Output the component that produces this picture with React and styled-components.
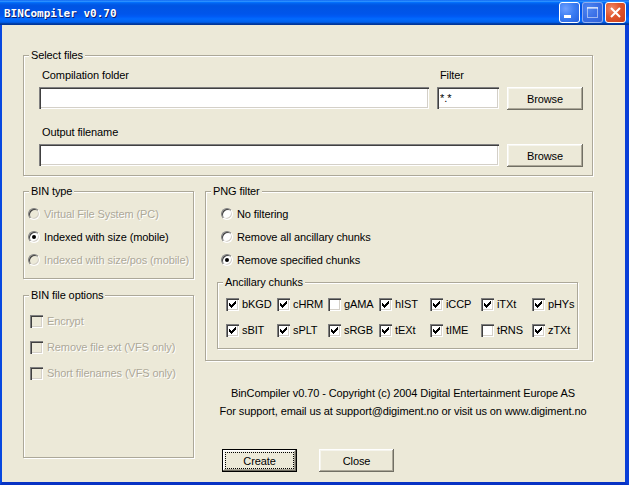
import React from 'react';
import styled, { createGlobalStyle } from 'styled-components';

const Global = createGlobalStyle`
  html, body {
    margin: 0;
    padding: 0;
    background: #ECE9D8;
  }
  body {
    font-family: "Liberation Sans", Arial, sans-serif;
    font-size: 11px;
    letter-spacing: -0.1px;
    color: #000;
  }
`;

const FACE = '#ECE9D8';

const Window = styled.div`
  width: 629px;
  height: 485px;
  display: flex;
  flex-direction: column;
  background: #0a3fd8;
  overflow: hidden;
`;

const TitleBar = styled.div`
  height: 25px;
  flex: none;
  display: flex;
  align-items: center;
  padding: 0 3px 0 4px;
  background: linear-gradient(to bottom, #0058ee 0%, #3593ff 4%, #288eff 6%, #127dff 8%, #036ffc 10%,
    #0262ee 14%, #0057e5 20%, #0054e3 24%, #0055eb 56%, #005bf5 66%, #026afe 76%, #0062ef 86%,
    #0052d6 92%, #0040ab 94%, #003092 100%);
`;

const TitleText = styled.div`
  flex: 1;
  color: #fff;
  font-family: "DejaVu Sans Mono", "Liberation Mono", monospace;
  font-weight: bold;
  font-size: 11px;
  letter-spacing: 0;
  text-shadow: 1px 1px 0 #0a1e6e;
  margin-top: 1px;
`;

const TitleButtons = styled.div`
  display: flex;
  gap: 2px;
  margin-top: -1px;
`;

const CapButton = styled.div`
  width: 21px;
  height: 21px;
  box-sizing: border-box;
  border-radius: 3px;
  border: 1px solid ${p => (p.$dim ? 'rgba(255,255,255,0.45)' : '#fff')};
  display: flex;
  align-items: center;
  justify-content: center;
  background: ${p =>
    p.$kind === 'close'
      ? 'radial-gradient(circle at 30% 30%, #f08a6a 0%, #e0542c 45%, #c9401c 100%)'
      : p.$dim
      ? 'radial-gradient(circle at 30% 30%, #4f86f0 0%, #3a6fe6 50%, #2e60d8 100%)'
      : 'radial-gradient(circle at 30% 30%, #6fa0ff 0%, #3c7ef3 45%, #2360df 100%)'};
`;

const Body = styled.div`
  flex: 1;
  background: ${FACE};
  border-left: 2px solid #0848e0;
  border-right: 4px solid #0a3fd8;
  border-bottom: 3px solid #0833c4;
  padding: 30px 0 0 21px;
  display: flex;
  flex-direction: column;
`;

const Group = styled.div`
  box-sizing: border-box;
  width: ${p => p.$w}px;
  height: ${p => p.$h}px;
  flex: none;
  border: 1px solid #aca899;
  box-shadow: inset 1px 1px 0 #fff, 1px 1px 0 #fff;
  display: flex;
  flex-direction: column;
  align-items: flex-start;
`;

const Caption = styled.div`
  margin: -7px 0 0 5px;
  padding: 0 2px;
  line-height: 13px;
  height: 13px;
  background: ${FACE};
  white-space: nowrap;
`;

const FilesGrid = styled.div`
  display: grid;
  grid-template-columns: 390px 62px 76px;
  column-gap: 8px;
  row-gap: 5px;
  align-items: start;
  padding: 7px 0 0 15px;
`;

const FieldLabel = styled.div`
  line-height: 13px;
  padding-left: 3px;
  grid-column: ${p => p.$span || 'auto'};
  margin-top: ${p => p.$gap || 0}px;
  white-space: nowrap;
`;

const TextBox = styled.input`
  box-sizing: border-box;
  width: 100%;
  height: 22px;
  margin: 0;
  padding: 0 3px;
  border: none;
  outline: none;
  background: #fff;
  font: 11px "Liberation Sans", Arial, sans-serif;
  color: #000;
  grid-column: ${p => p.$span || 'auto'};
  box-shadow: inset 1px 1px #808080, inset 2px 2px #404040, inset -1px -1px #fff, inset -2px -2px #d4d0c8;
`;

const Button = styled.button`
  box-sizing: border-box;
  width: ${p => p.$w || 75}px;
  height: 23px;
  margin: 0;
  padding: 0;
  font: 11px "Liberation Sans", Arial, sans-serif;
  letter-spacing: -0.1px;
  color: #000;
  background: ${FACE};
  border: ${p => (p.$default ? '1px solid #000' : 'none')};
  box-shadow: inset -1px -1px #716f64, inset 1px 1px #fff, inset -2px -2px #aca899, inset 2px 2px #f6f5ee;
  display: flex;
  align-items: center;
  justify-content: center;
`;

const FocusRing = styled.span`
  box-sizing: border-box;
  width: 69px;
  height: 17px;
  border: 1px dotted #000;
  display: flex;
  align-items: center;
  justify-content: center;
`;

const Columns = styled.div`
  display: flex;
  gap: 11px;
  margin-top: 15px;
`;

const LeftCol = styled.div`
  display: flex;
  flex-direction: column;
  gap: 16px;
`;

const RightCol = styled.div`
  display: flex;
  flex-direction: column;
`;

const OptionList = styled.div`
  display: flex;
  flex-direction: column;
  padding: ${p => p.$pad};
`;

const Option = styled.label`
  display: flex;
  align-items: center;
  height: ${p => p.$h || 23}px;
  white-space: nowrap;
  color: ${p => (p.$off ? '#aca899' : '#000')};
  text-shadow: ${p => (p.$off ? '1px 1px 0 #fff' : 'none')};
`;

const RadioDot = styled.span`
  box-sizing: border-box;
  width: 12px;
  height: 12px;
  flex: none;
  margin-right: 4px;
  border-radius: 50%;
  border: 1px solid;
  border-color: #808080 #fff #fff #808080;
  background: ${p => (p.$off ? FACE : '#fff')};
  box-shadow: inset 1px 1px 0 #404040, inset -1px -1px 0 #d4d0c8;
  display: flex;
  align-items: center;
  justify-content: center;
  text-shadow: none;
  &::after {
    content: '';
    width: 4px;
    height: 4px;
    border-radius: 50%;
    background: #000;
    display: ${p => (p.$on ? 'block' : 'none')};
  }
`;

const Box = styled.span`
  box-sizing: border-box;
  width: 13px;
  height: 13px;
  flex: none;
  margin-right: ${p => p.$gap || 4}px;
  background: ${p => (p.$off ? FACE : '#fff')};
  box-shadow: inset 1px 1px #808080, inset 2px 2px #404040, inset -1px -1px #fff, inset -2px -2px #d4d0c8;
  display: flex;
`;

const ChunkGrid = styled.div`
  display: grid;
  grid-template-columns: repeat(7, 51px);
  grid-auto-rows: 26px;
  padding: 2px 0 0 8px;
`;

const Footer = styled.div`
  margin-top: 23px;
  padding-left: 8px;
  text-align: center;
  line-height: 18px;
`;

const ButtonRow = styled.div`
  display: flex;
  gap: 22px;
  margin-top: 29px;
  padding-left: 17px;
`;

const CheckMark = () => (
  <svg width="13" height="13" viewBox="0 0 13 13" shapeRendering="crispEdges">
    {[2, 3, 4, 3, 2, 1, 0].map((o, i) => (
      <rect key={i} x={3 + i} y={3 + o} width="1" height="3" fill="#000" />
    ))}
  </svg>
);

const Radio = ({ on, off, children }) => (
  <Option $off={off}>
    <RadioDot $on={on} $off={off} />
    {children}
  </Option>
);

const Check = ({ on, off, gap, h, children }) => (
  <Option $off={off} $h={h}>
    <Box $off={off} $gap={gap}>{on && <CheckMark />}</Box>
    {children}
  </Option>
);

const chunks = [
  ['bKGD', true], ['cHRM', true], ['gAMA', false], ['hIST', true], ['iCCP', true], ['iTXt', true], ['pHYs', true],
  ['sBIT', true], ['sPLT', true], ['sRGB', true], ['tEXt', true], ['tIME', true], ['tRNS', false], ['zTXt', true],
];

export default function App() {
  return (
    <>
      <Global />
      <Window>
        <TitleBar>
          <TitleText>BINCompiler v0.70</TitleText>
          <TitleButtons>
            <CapButton>
              <svg width="19" height="19" viewBox="0 0 19 19">
                <rect x="4" y="12" width="7" height="3" fill="#fff" />
              </svg>
            </CapButton>
            <CapButton $dim>
              <svg width="19" height="19" viewBox="0 0 19 19" shapeRendering="crispEdges">
                <rect x="4.5" y="4.5" width="10" height="10" fill="none" stroke="rgba(255,255,255,0.5)" />
                <rect x="4" y="4" width="11" height="2" fill="rgba(255,255,255,0.5)" />
              </svg>
            </CapButton>
            <CapButton $kind="close">
              <svg width="19" height="19" viewBox="0 0 19 19">
                <path d="M5 5 L14 14 M14 5 L5 14" stroke="#fff" strokeWidth="2" />
              </svg>
            </CapButton>
          </TitleButtons>
        </TitleBar>
        <Body>
          <Group $w={570} $h={121}>
            <Caption>Select files</Caption>
            <FilesGrid>
              <FieldLabel>Compilation folder</FieldLabel>
              <FieldLabel>Filter</FieldLabel>
              <span />
              <TextBox readOnly value="" />
              <TextBox readOnly value="*.*" />
              <Button $w={76}>Browse</Button>
              <FieldLabel $span="1 / 3" $gap={11}>Output filename</FieldLabel>
              <span />
              <TextBox $span="1 / 3" readOnly value="" />
              <Button $w={76}>Browse</Button>
            </FilesGrid>
          </Group>
          <Columns>
            <LeftCol>
              <Group $w={171} $h={88}>
                <Caption>BIN type</Caption>
                <OptionList $pad="4px 0 0 4px">
                  <Radio off>Virtual File System (PC)</Radio>
                  <Radio on>Indexed with size (mobile)</Radio>
                  <Radio off>Indexed with size/pos (mobile)</Radio>
                </OptionList>
              </Group>
              <Group $w={171} $h={163}>
                <Caption>BIN file options</Caption>
                <OptionList $pad="6px 0 0 6px">
                  <Check off h={26}>Encrypt</Check>
                  <Check off h={26}>Remove file ext (VFS only)</Check>
                  <Check off h={26}>Short filenames (VFS only)</Check>
                </OptionList>
              </Group>
            </LeftCol>
            <RightCol>
              <Group $w={388} $h={170}>
                <Caption>PNG filter</Caption>
                <OptionList $pad="4px 0 0 15px">
                  <Radio>No filtering</Radio>
                  <Radio>Remove all ancillary chunks</Radio>
                  <Radio on>Remove specified chunks</Radio>
                </OptionList>
                <OptionList $pad="11px 0 0 11px">
                  <Group $w={361} $h={67}>
                    <Caption>Ancillary chunks</Caption>
                    <ChunkGrid>
                      {chunks.map(([name, on]) => (
                        <Check key={name} on={on} gap={3} h={26}>{name}</Check>
                      ))}
                    </ChunkGrid>
                  </Group>
                </OptionList>
              </Group>
              <Footer>
                BinCompiler v0.70 - Copyright (c) 2004 Digital Entertainment Europe AS
                <br />
                For support, email us at support@digiment.no or visit us on www.digiment.no
              </Footer>
              <ButtonRow>
                <Button $default>
                  <FocusRing>Create</FocusRing>
                </Button>
                <Button>Close</Button>
              </ButtonRow>
            </RightCol>
          </Columns>
        </Body>
      </Window>
    </>
  );
}
